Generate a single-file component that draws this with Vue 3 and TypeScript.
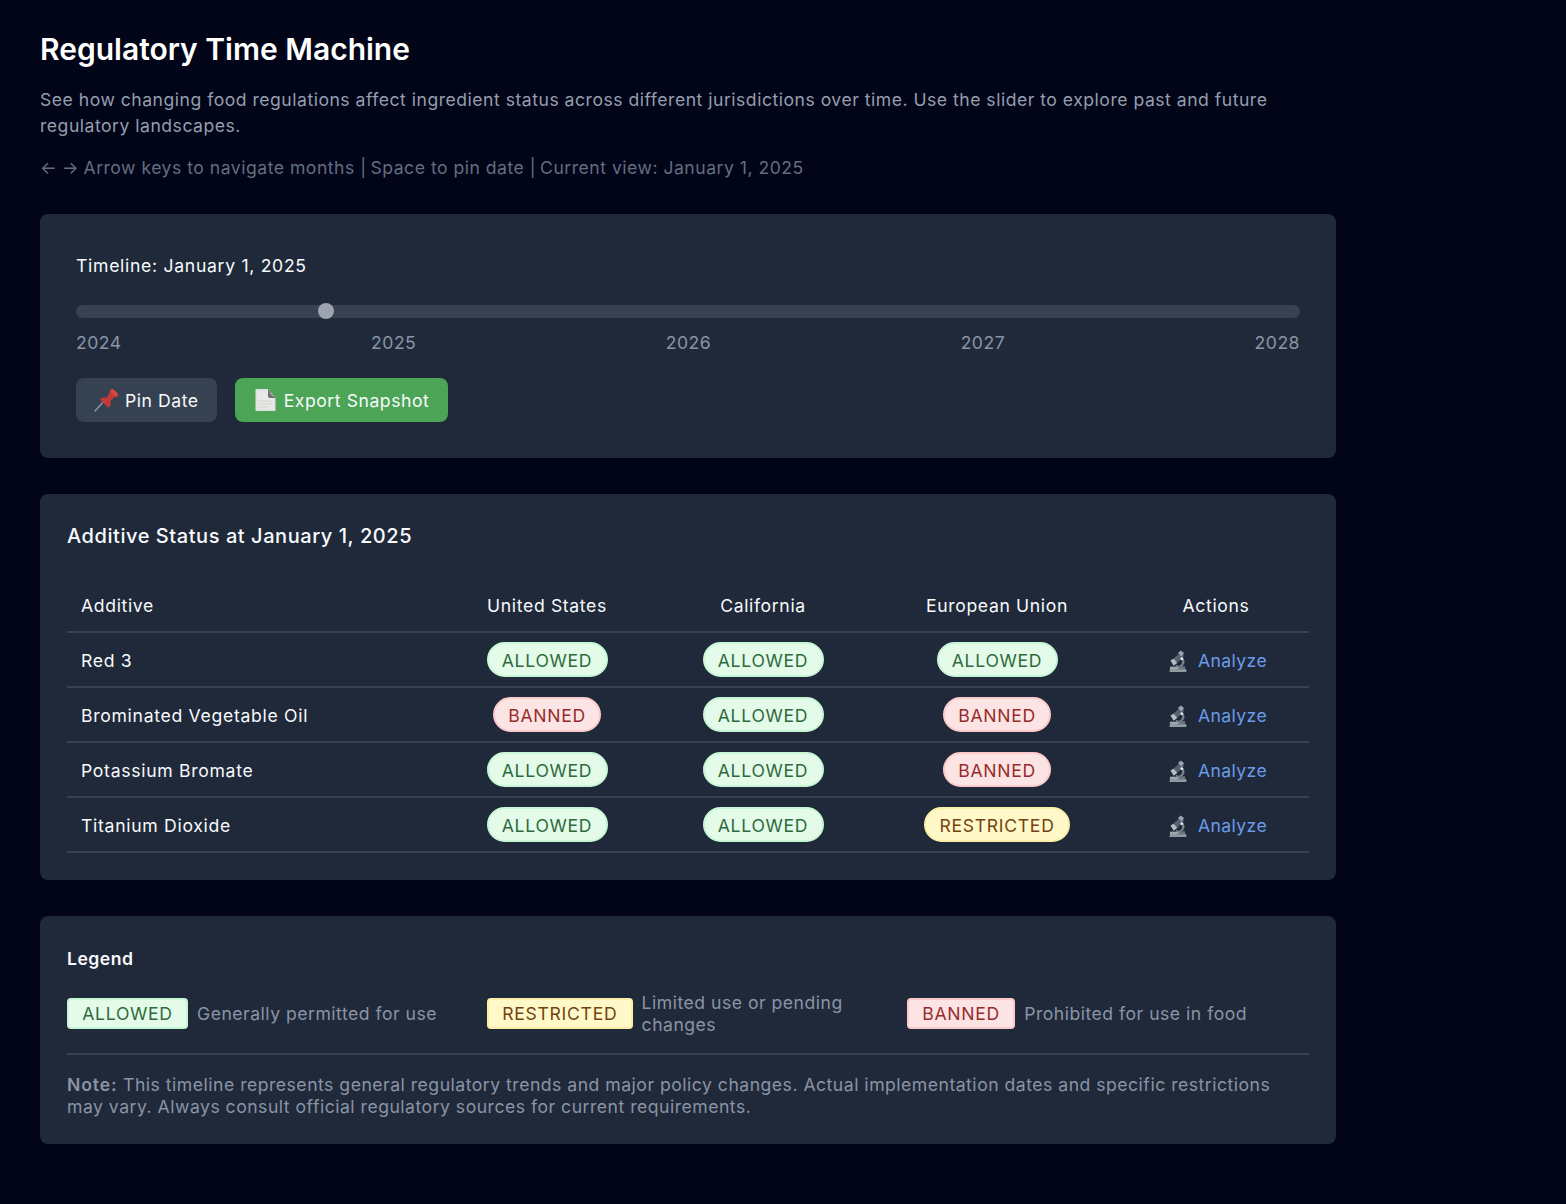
<script setup lang="ts">
type Status = 'ALLOWED' | 'BANNED' | 'RESTRICTED'
interface Row { name: string; us: Status; ca: Status; eu: Status }
const rows: Row[] = [
  { name: 'Red 3', us: 'ALLOWED', ca: 'ALLOWED', eu: 'ALLOWED' },
  { name: 'Brominated Vegetable Oil', us: 'BANNED', ca: 'ALLOWED', eu: 'BANNED' },
  { name: 'Potassium Bromate', us: 'ALLOWED', ca: 'ALLOWED', eu: 'BANNED' },
  { name: 'Titanium Dioxide', us: 'ALLOWED', ca: 'ALLOWED', eu: 'RESTRICTED' },
]
const years = ['2024', '2025', '2026', '2027', '2028']
const legend: { s: Status; t: string }[] = [
  { s: 'ALLOWED', t: 'Generally permitted for use' },
  { s: 'RESTRICTED', t: 'Limited use or pending changes' },
  { s: 'BANNED', t: 'Prohibited for use in food' },
]
</script>

<template>
  <main class="page">
    <h1>Regulatory Time Machine</h1>
    <p class="lead">See how changing food regulations affect ingredient status across different jurisdictions over time. Use the slider to explore past and future regulatory landscapes.</p>
    <p class="hint"><span class="arrow">←</span> <span class="arrow">→</span> Arrow keys to navigate months <span class="bar">|</span> Space to pin date <span class="bar">|</span> Current view: January 1, 2025</p>

    <section class="card timeline">
      <div class="tl-label">Timeline: January 1, 2025</div>
      <div class="track"><span class="thumb"></span></div>
      <div class="years"><span v-for="y in years" :key="y">{{ y }}</span></div>
      <div class="buttons">
        <button class="btn pin">
          <svg class="emoji" width="25" height="24" viewBox="0 0 25 24">
            <path d="M1 23 L10 13" stroke="#8b9aa8" stroke-width="1.400" stroke-linecap="round"/>
            <path d="M6.500 10.500 C8.500 9.300 10.500 9.300 12.300 9.800 L15.500 5.800 C15.200 4 15.700 3.300 16.500 2.200 C17.400 1.200 18.800 0.800 19.800 1.700 L23.200 5 C24.200 6.200 24 7.700 23 8.500 C22.200 9.100 21.500 9.300 20.500 9 L16.500 13 C17.300 15.400 16.800 17.400 15.300 19.200 C14.300 19.700 13.400 19 12.500 18 L7.200 12.800 C6.500 12 6 11.200 6.500 10.500 Z" fill="#c23a35"/>
            <path d="M17 4 L21.500 8.500 L23 8.500 C24 7.700 24.200 6.200 23.200 5 L19.800 1.700 C18.800 0.800 17.400 1.200 16.500 2.200 Z" fill="#d8473f"/>
          </svg>
          <span>Pin Date</span>
        </button>
        <button class="btn export">
          <svg class="emoji" width="21" height="24" viewBox="0 0 21 24">
            <path d="M0.500 1 H13 L20.500 10 V23 H0.500 Z" fill="#dfe1df"/>
            <path d="M2 3 H12 L19 11 V21.500 H2 Z" fill="#e9eae8"/>
            <path d="M13 1 L20.500 10 H15 C13.600 10 13 9 13 8 Z" fill="#6e6f70"/>
            <path d="M13.500 1.500 L20 9.300 L16 7 Z" fill="#a9aaab"/>
            <path d="M3 13 H18 M3 16 H18 M3 19 H14" stroke="#d2d4d2" stroke-width="1"/>
          </svg>
          <span>Export Snapshot</span>
        </button>
      </div>
    </section>

    <section class="card status">
      <h2>Additive Status at January 1, 2025</h2>
      <table>
        <colgroup>
          <col class="c-name" /><col class="c-us" /><col class="c-ca" /><col class="c-eu" /><col class="c-act" />
        </colgroup>
        <thead>
          <tr>
            <th class="left">Additive</th><th>United States</th><th>California</th><th>European Union</th><th>Actions</th>
          </tr>
        </thead>
        <tbody>
          <tr v-for="r in rows" :key="r.name">
            <td class="left">{{ r.name }}</td>
            <td v-for="(v, i) in [r.us, r.ca, r.eu]" :key="i"><span class="badge pill" :class="v.toLowerCase()">{{ v }}</span></td>
            <td>
              <span class="analyze">
                <svg class="scope" width="18" height="24" viewBox="0 0 19 24">
                  <path d="M1 20.500 H18 L18.500 23.500 H0.500 Z" fill="#8f9aa1"/>
                  <path d="M7 17 C10 19.500 14.500 18.500 16 15 C17.200 11.500 15.500 8.500 13 7.500 L12 10 C13.700 11 14.300 13 13.400 15 C12.300 17 9.700 17.600 7.800 16 Z" fill="#76848d"/>
                  <path d="M8 17.500 H17 V21 H8 Z" fill="#6b7780"/>
                  <path d="M3 11 L12 3 L16 6.500 L7.500 15.500 Z" fill="#55636e"/>
                  <path d="M9.500 3.500 L12.500 0.800 L16 3.800 L13 7 Z" fill="#94a6b1"/>
                  <path d="M1.500 11.500 L5 9.500 L8.500 14 L5 17 Z" fill="#b4bfc5"/>
                  <circle cx="13.500" cy="9.500" r="1.500" fill="#e4e9ec"/>
                  <path d="M1 18 H10 V20.500 H1 Z" fill="#9da8ae"/>
                </svg>
                <a>Analyze</a>
              </span>
            </td>
          </tr>
        </tbody>
      </table>
    </section>

    <section class="card legend">
      <h3>Legend</h3>
      <div class="legend-grid">
        <div v-for="l in legend" :key="l.s" class="legend-item">
          <span class="badge square" :class="l.s.toLowerCase()">{{ l.s }}</span>
          <span class="legend-text">{{ l.t }}</span>
        </div>
      </div>
      <p class="note"><strong>Note:</strong> This timeline represents general regulatory trends and major policy changes. Actual implementation dates and specific restrictions may vary. Always consult official regulatory sources for current requirements.</p>
    </section>
  </main>
</template>

<style>
html, body { background: #020518; }
</style>

<style scoped>
.page {
  width: 1296px;
  padding: 32px 0 60px 40px;
  font-family: Inter, "Liberation Sans", sans-serif;
  letter-spacing: 0.5px;
  color: #f8fafc;
  font-size: 18px;
}
h1 { margin: 0; font-size: 30px; line-height: 35px; font-weight: 600; letter-spacing: 0; color: #fff; }
.lead { margin: 20px 0 0; font-size: 17.6px; line-height: 26px; color: #959eae; }
.hint { margin: 16px 0 0; font-size: 17.6px; line-height: 26px; color: #646e80; }
.arrow { letter-spacing: -0.5px; }
.bar { letter-spacing: -1px; }
.card { background: #1f293a; border-radius: 8px; }
.timeline { margin-top: 33px; height: 244px; padding: 36px; box-sizing: border-box; }
.tl-label { font-size: 17.6px; line-height: 30px; font-weight: 400; letter-spacing: 0.7px; color: #f8fafc; transform: translateY(1px); }
.track { position: relative; height: 13px; margin-top: 25px; border-radius: 7px; background: #364152; }
.thumb { position: absolute; left: 242px; top: -2px; width: 16px; height: 16px; border-radius: 50%; background: #9ca3af; }
.years { display: flex; justify-content: space-between; margin-top: 13px; font-size: 17.6px; line-height: 24px; color: #8a94a5; }
.buttons { display: flex; gap: 18px; margin-top: 23px; }
.btn { display: flex; align-items: center; height: 44px; border: 0; border-radius: 8px; padding: 0 18px; font: inherit; font-size: 17.6px; letter-spacing: 0.55px; color: #f8fafc; }
.pin { background: #364152; }
.export { background: #4ca456; padding: 0 19px 0 20px; }
.pin .emoji { margin-right: 6px; }
.export .emoji { margin-right: 8px; }
.status { margin-top: 36px; height: 386px; padding: 27px; box-sizing: border-box; }
h2 { margin: 0; font-size: 20px; line-height: 30px; font-weight: 500; letter-spacing: 0.56px; color: #f8fafc; }
table { width: 1242px; margin-top: 29px; border-collapse: collapse; table-layout: fixed; }
.c-name { width: 372px; } .c-us { width: 216px; } .c-ca { width: 216px; } .c-eu { width: 252px; } .c-act { width: 186px; }
th { height: 51px; padding: 0; text-align: center; font-size: 17.6px; font-weight: 400; letter-spacing: 0.65px; border-bottom: 2px solid #364152; color: #f8fafc; }
td { box-sizing: border-box; height: 55px; padding: 2px 0 0; text-align: center; font-size: 17.6px; font-weight: 400; letter-spacing: 0.7px; border-bottom: 2px solid #364152; }
.left { text-align: left; padding-left: 14px; }
.badge { display: inline-block; box-sizing: border-box; border: 2px solid; font-size: 17.6px; font-weight: 400; letter-spacing: 0.7px; text-align: center; }
.pill { height: 35px; line-height: 33px; padding: 0 13.25px; margin-bottom: 2px; border-radius: 18px; vertical-align: middle; }
.square { height: 31px; line-height: 28px; padding: 0 13.25px; border-radius: 4px; flex: none; }
.allowed { background: #e3fbe8; border-color: #c6f6d5; color: #2f6a3e; }
.banned { background: #fde4e4; border-color: #fbcaca; color: #962c2c; }
.restricted { background: #fff9c9; border-color: #fbefa8; color: #744210; }
.analyze { display: inline-flex; align-items: center; gap: 11px; padding-left: 4px; color: #6b9be8; font-weight: 400; letter-spacing: 0.4px; vertical-align: middle; }
.legend { margin-top: 36px; height: 228px; padding: 27px; box-sizing: border-box; }
h3 { margin: 0; font-size: 17.6px; line-height: 30px; font-weight: 600; color: #f8fafc; transform: translateY(1px); }
.legend-grid { display: grid; grid-template-columns: repeat(3, 402px); gap: 18px; margin-top: 18px; padding-bottom: 17px; border-bottom: 2px solid #364152; }
.legend-item { display: flex; align-items: center; gap: 9px; min-height: 44px; }
.legend-text { font-size: 17.6px; line-height: 22px; color: #8a94a5; padding-top: 1px; }
.note { margin: 19px 0 0; font-size: 17.6px; line-height: 22px; color: #8a94a5; }
.note strong { font-weight: 600; letter-spacing: 0.9px; }
</style>
